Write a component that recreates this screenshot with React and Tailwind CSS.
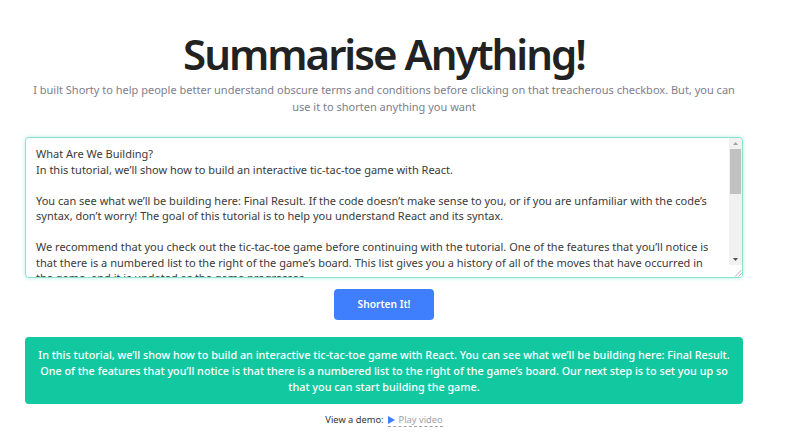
import React from "react";

const sample = `What Are We Building?
In this tutorial, we’ll show how to build an interactive tic-tac-toe game with React.

You can see what we’ll be building here: Final Result. If the code doesn’t make sense to you, or if you are unfamiliar with the code’s
syntax, don’t worry! The goal of this tutorial is to help you understand React and its syntax.

We recommend that you check out the tic-tac-toe game before continuing with the tutorial. One of the features that you’ll notice is
that there is a numbered list to the right of the game’s board. This list gives you a history of all of the moves that have occurred in
the game, and it is updated as the game progresses.

You can close the tic-tac-toe game once you’re familiar with it. We’ll be starting from a simpler template in this tutorial. Our next
step is to set you up so that you can start building the game.`;

const Scrollbar = () => (
  <div className="w-[13px] flex flex-col bg-[#f1f1f1]">
    <div className="h-[11px] flex items-center justify-center">
      <svg width="5" height="3" viewBox="0 0 5 3">
        <path d="M2.5 0 L5 3 L0 3 Z" fill="#a3a3a3" />
      </svg>
    </div>
    <div className="h-[45px] mx-[1px] bg-[#c1c1c1]" />
    <div className="flex-1" />
    <div className="h-[11px] flex items-center justify-center">
      <svg width="5" height="3" viewBox="0 0 5 3">
        <path d="M0 0 L5 0 L2.5 3 Z" fill="#505050" />
      </svg>
    </div>
    <div className="h-[12px] bg-white flex items-end justify-end">
      <svg width="9" height="9" viewBox="0 0 9 9">
        <path d="M8.5 2 L2 8.5 M8.5 5.5 L5.5 8.5" stroke="#b0b0b0" strokeWidth="1" />
      </svg>
    </div>
  </div>
);

const App = () => {
  return (
    <div className="w-[768px] px-[25px] pt-[28px] pb-[20px] flex flex-col items-center font-['Noto_Sans',sans-serif] bg-white">
      <h1 className="text-[42px] leading-[52px] font-semibold text-[#222222] tracking-[-2px]">
        Summarise Anything!
      </h1>
      <p className="mt-[1px] text-[11px] leading-[17px] text-[#7d7e8c] text-center">
        I built Shorty to help people better understand obscure terms and conditions before clicking on that treacherous checkbox. But, you can
        <br />
        use it to shorten anything you want
      </p>

      <div className="mt-[22px] w-full h-[141px] flex rounded-[4px] border border-[#86e3cf] shadow-[0_0_4px_rgba(16,200,160,0.3)] overflow-hidden bg-white">
        <textarea
          className="flex-1 min-w-0 h-full pl-[10px] pr-[4px] py-[8px] text-[11px] leading-[15.5px] text-[#3a3a3a] outline-none resize-none overflow-hidden"
          wrap="off"
          defaultValue={sample}
        />
        <Scrollbar />
      </div>

      <button className="mt-[11px] w-[100px] h-[31px] rounded-[4px] bg-[#3f7efc] text-white text-[10.2px] font-semibold">
        Shorten It!
      </button>

      <div className="mt-[17px] w-full rounded-[4px] bg-[#12c8a0] px-[10px] pt-[10px] pb-[9px] text-white text-[10.8px] leading-[16px] font-medium text-center">
        In this tutorial, we’ll show how to build an interactive tic-tac-toe game with React. You can see what we’ll be building here: Final Result.
        <br />
        One of the features that you’ll notice is that there is a numbered list to the right of the game’s board. Our next step is to set you up so
        <br />
        that you can start building the game.
      </div>

      <div className="mt-[9px] flex items-center gap-[4px] text-[9.3px] text-[#333333]">
        <span>View a demo:</span>
        <span className="flex items-center gap-[4px] text-[#a0a0a8] border-b border-dashed border-[#a0a0a8] leading-[13px]">
          <svg width="7" height="8" viewBox="0 0 7 8">
            <path d="M0 0 L7 4 L0 8 Z" fill="#3f7efc" />
          </svg>
          Play video
        </span>
      </div>
    </div>
  );
};

export default App;
